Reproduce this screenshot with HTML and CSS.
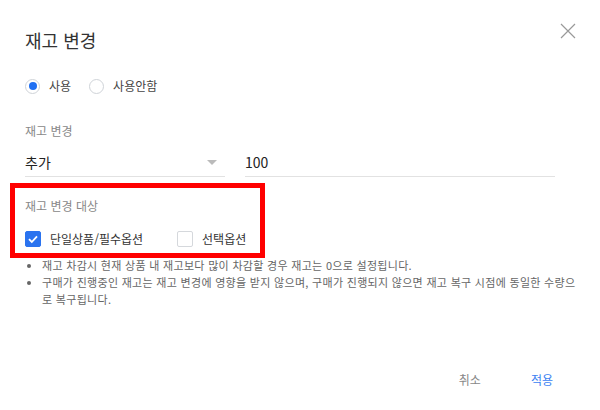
FILE: index.html
```html
<!DOCTYPE html>
<html lang="ko">
<head>
  <meta charset="UTF-8">
  <meta name="viewport" content="width=device-width, initial-scale=1.0">
  <title>재고 변경</title>
  <link rel="stylesheet" href="styles.css">
</head>
<body>

  <div class="dialog">
    <button type="button" class="close" aria-label="닫기">
      <svg width="16" height="16" viewBox="0 0 16 16"><path d="M1 1L15 15M15 1L1 15" stroke="#999" stroke-width="1.2" fill="none"/></svg>
    </button>

    <h1>재고 변경</h1>

    <div class="radios">
      <label class="radio"><span class="dot on"></span>사용</label>
      <label class="radio"><span class="dot"></span>사용안함</label>
    </div>

    <div class="label">재고 변경</div>
    <div class="fields">
      <div class="select">추가<span class="arrow"></span></div>
      <div class="input">100</div>
    </div>

    <div class="label target">재고 변경 대상</div>
    <div class="checks">
      <label class="check"><span class="box on"><svg width="12" height="12" viewBox="0 0 12 12"><path d="M2 6.2L4.8 9L10 3.3" stroke="#fff" stroke-width="1.8" fill="none"/></svg></span>단일상품/필수옵션</label>
      <label class="check"><span class="box"></span>선택옵션</label>
    </div>

    <ul class="notes">
      <li>재고 차감시 현재 상품 내 재고보다 많이 차감할 경우 재고는 0으로 설정됩니다.</li>
      <li>구매가 진행중인 재고는 재고 변경에 영향을 받지 않으며, 구매가 진행되지 않으면 재고 복구 시점에 동일한 수량으로 복구됩니다.</li>
    </ul>

    <div class="footer">
      <button type="button" class="btn">취소</button>
      <button type="button" class="btn primary">적용</button>
    </div>

    <div class="highlight"></div>
  </div>

</body>
</html>
```

FILE: styles.css
```css
body {
  margin: 0;
  background: #fff;
  font-family: 'Noto Sans CJK KR', 'Noto Sans', sans-serif;
  color: #333;
}

.dialog {
  position: relative;
  width: 600px;
  height: 410px;
  padding: 27px 25px 0;
  box-sizing: border-box;
}

.close {
  position: absolute;
  top: 23px;
  right: 24px;
  padding: 0;
  border: none;
  background: none;
  line-height: 0;
}

h1 {
  margin: 0;
  font-size: 18px;
  line-height: 26px;
  font-weight: 400;
  color: #333;
}

.radios {
  display: flex;
  gap: 18px;
  margin-top: 25px;
}

.radio, .check {
  display: flex;
  align-items: center;
  gap: 9px;
  font-size: 12px;
  line-height: 16px;
  color: #444;
}

.dot {
  width: 13px;
  height: 13px;
  border: 1px solid #cfd3d8;
  border-radius: 50%;
  position: relative;
}

.dot.on::after {
  content: '';
  position: absolute;
  left: 2.5px;
  top: 2.5px;
  width: 8px;
  height: 8px;
  border-radius: 50%;
  background: #1f6ff2;
}

.label {
  margin-top: 29px;
  font-size: 12px;
  line-height: 16px;
  color: #888;
}

.fields {
  display: flex;
  gap: 20px;
  margin-top: 13px;
  width: 530px;
}

.select, .input {
  font-size: 14px;
  line-height: 20px;
  padding-bottom: 4px;
  border-bottom: 1px solid #e2e2e2;
  color: #222;
}

.select {
  width: 200px;
  display: flex;
  justify-content: space-between;
  align-items: center;
}

.arrow {
  margin-right: 8px;
  border-left: 5px solid transparent;
  border-right: 5px solid transparent;
  border-top: 5px solid #bbb;
}

.input {
  flex: 1;
}

.label.target {
  margin-top: 21px;
}

.checks {
  display: flex;
  gap: 34px;
  margin-top: 16px;
}

.check {
  line-height: 18px;
  color: #333;
}

.box {
  width: 14px;
  height: 14px;
  border: 1px solid #d5d8dc;
  border-radius: 2px;
  display: flex;
  align-items: center;
  justify-content: center;
}

.box.on {
  background: #2a73ef;
  border-color: #2a73ef;
}

.notes {
  margin: 9px 0 0;
  padding-left: 17px;
  width: 543px;
  font-size: 11px;
  line-height: 17px;
  letter-spacing: 0.3px;
  color: #666;
}

.footer {
  position: absolute;
  right: 47px;
  bottom: 22px;
  display: flex;
  gap: 50px;
}

.btn {
  padding: 0;
  border: none;
  background: none;
  font-family: inherit;
  font-size: 12px;
  line-height: 16px;
  color: #888;
}

.btn.primary {
  color: #3b7ff2;
}

.highlight {
  position: absolute;
  left: 10px;
  top: 183px;
  width: 245px;
  height: 65px;
  border: 5px solid #ff0000;
}
```
